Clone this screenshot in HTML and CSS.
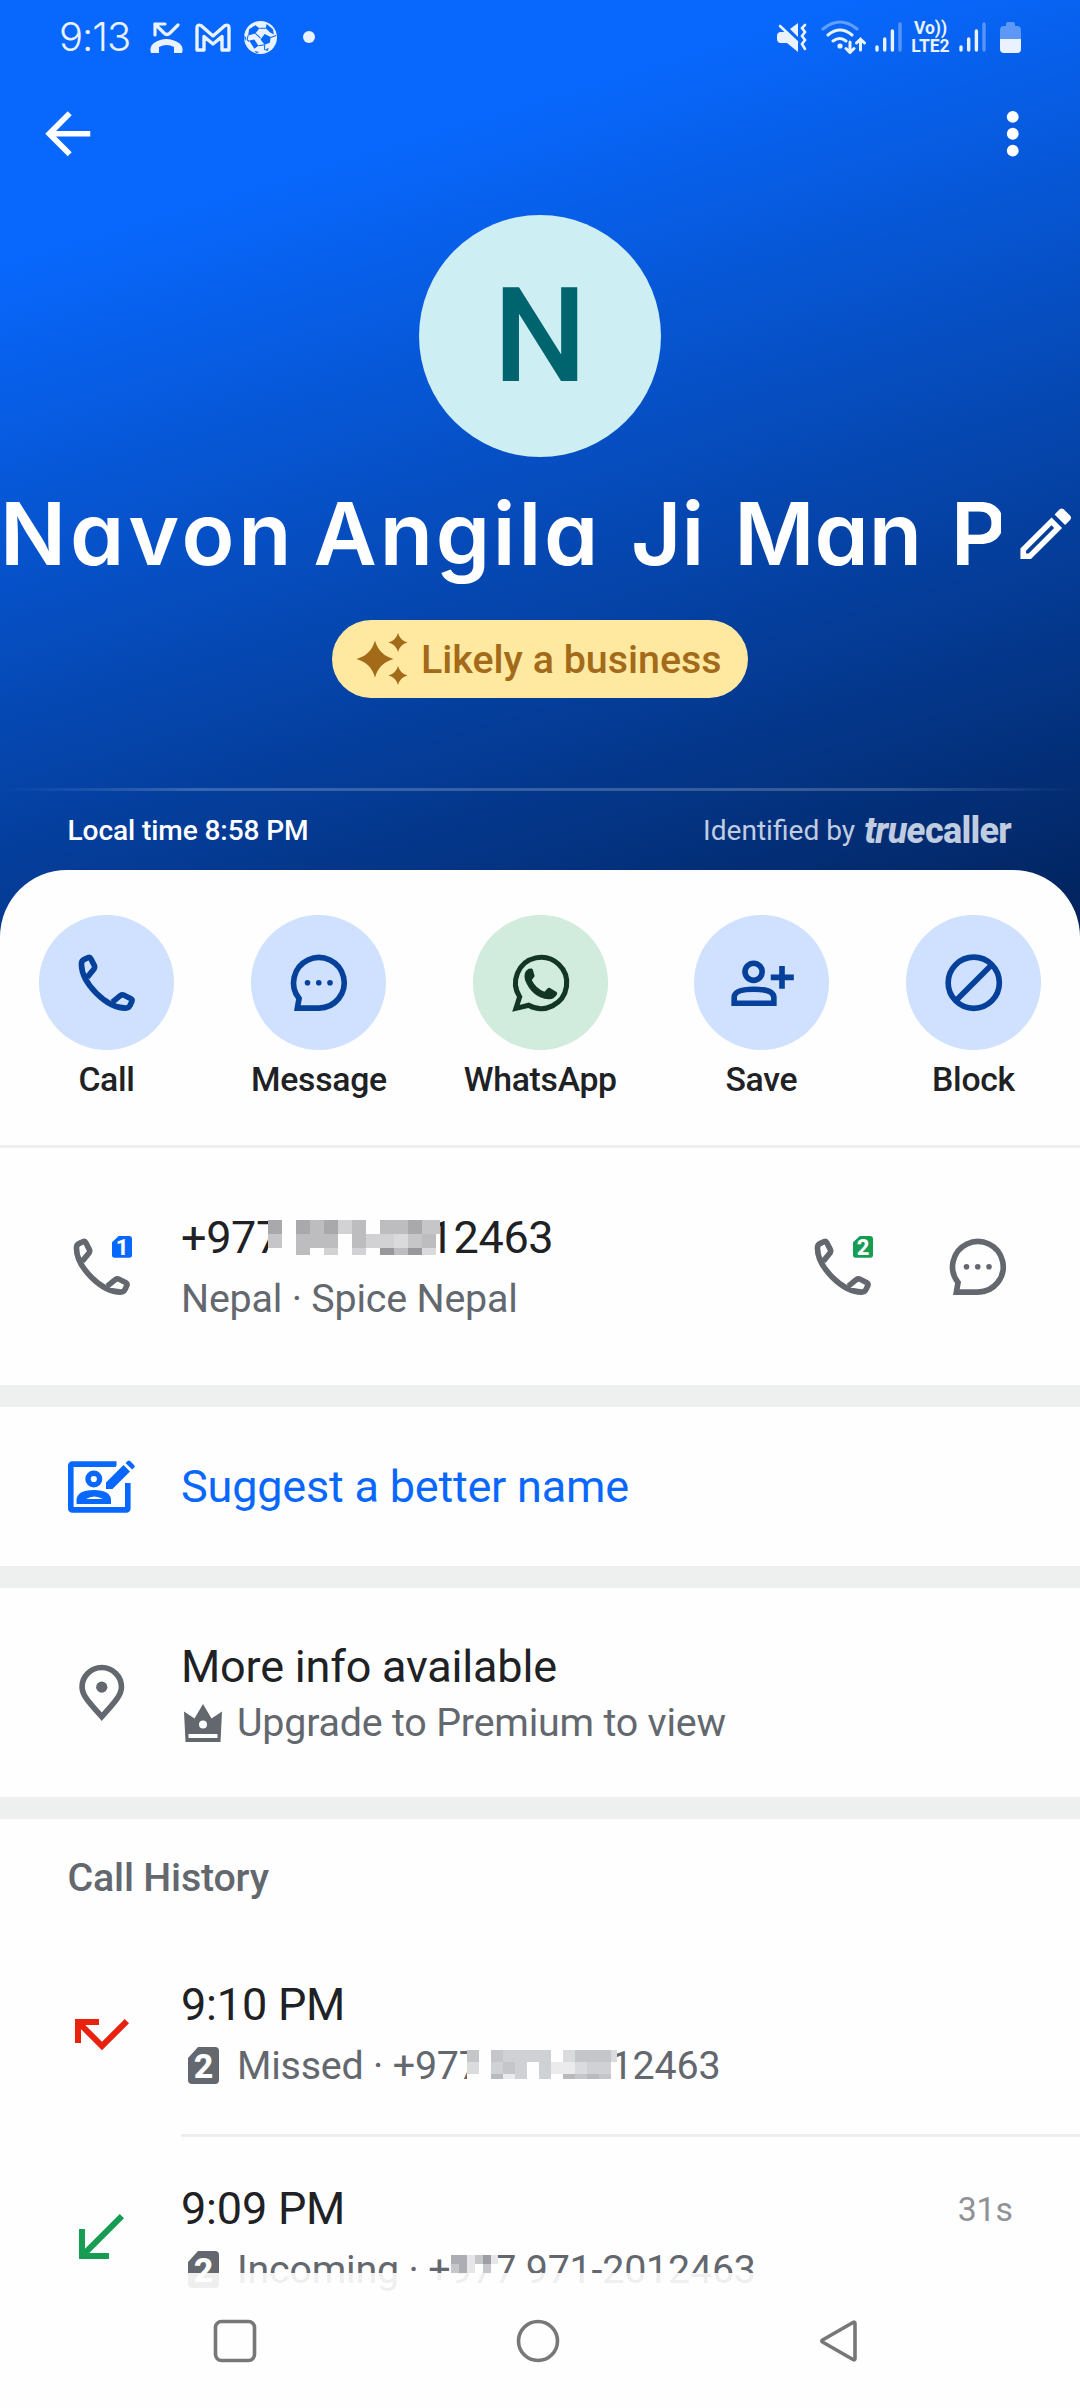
FILE: index.html
```html
<!DOCTYPE html>
<html lang="en">
<head>
<meta charset="utf-8">
<title>Caller details</title>
<link rel="stylesheet" href="styles.css">
</head>
<body>
<svg class="defs" aria-hidden="true">
  <symbol id="phone" viewBox="0 0 24 24">
    <path fill="none" stroke="currentColor" stroke-width="2" stroke-linejoin="round" d="M5.1 10 7.4 7.2C7.7 6.8 7.8 6.4 7.6 5.9L6.3 3.4C6.1 3 5.8 2.9 5.3 3.1L4 3.7C3.3 4 3 4.4 3 5.3C3 12.1 11.9 21 18.7 21C19.6 21 20 20.7 20.3 20L20.9 18.7C21.1 18.2 21 17.9 20.6 17.7L18.1 16.4C17.6 16.2 17.2 16.3 16.8 16.6L14 18.9"/>
  </symbol>
  <symbol id="chat" viewBox="0 0 24 24">
    <path fill="none" stroke="currentColor" stroke-width="2" d="M12 21A9 9 0 1 0 5 17.6L4.4 21Z"/>
    <circle cx="8" cy="12" r="1"/><circle cx="12" cy="12" r="1"/><circle cx="16" cy="12" r="1"/>
  </symbol>
  <symbol id="signal" viewBox="0 0 27 30">
    <g stroke="currentColor" stroke-width="3.4" stroke-linecap="round"><path d="M2 25v3M9.7 17v11M17.4 9v19"/><path opacity=".35" d="M25 2v26"/></g>
  </symbol>
  <symbol id="sim" viewBox="0 0 31 37">
    <path d="M10 0H27a4 4 0 0 1 4 4V33a4 4 0 0 1-4 4H4a4 4 0 0 1-4-4V11Z"/>
  </symbol>
</svg>
<main class="screen">
  <header class="hero">
    <div class="status">
      <div class="status-left">
        <span class="clock">9:13</span>
        <svg class="s-missed" viewBox="0 0 33 31"><g fill="none" stroke="currentColor" stroke-width="3.2" stroke-linecap="round" stroke-linejoin="round"><path d="M15 2H5v11M5 2l9 9q3 3 6 0l8-8"/></g><path d="M1 31q-2-6 3-10q12-8 25 0q5 4 3 10h-8v-6q-7-4-15 0v6z"/></svg>
        <svg class="s-mail" viewBox="0 0 36 29"><path fill="none" stroke="currentColor" stroke-width="3.4" stroke-linejoin="round" d="M2 27V5q0-4 4-2.500L18 13 30 2.500Q34 1 34 5V27H27V13.500L18 21 9 13.500V27Z"/></svg>
        <svg class="s-ball" viewBox="0 0 32 32"><circle cx="16" cy="16" r="16"/><g fill="#0868fe"><path d="M5 8l6-4 4 3-4 5-7 2zM22 3l6 5 1 5-4-2-4-4zM20 12.500l6 3-1 5.500-5 2-4-5zM5 19l5-1 4 6-4 3zM20 28l4-2-1 3zM10 29l5 1-3 1zM0 14l2 2-1 4z"/></g><path fill="none" stroke="#0868fe" d="M11 12l5 4.500M15 7l6 0M20 23v5M14 24l6-1M26 16l5-2M4 14l-1 4 2 2"/></svg>
        <span class="dot"></span>
      </div>
      <div class="status-right">
        <svg class="s-mute" viewBox="0 0 30 29"><path d="M4 9h5L21 20v9L10 20H3q-3-1-3-4v-3q0-4 4-4zM13 6l8-6v14z"/><path fill="none" stroke="currentColor" stroke-width="2.600" stroke-linecap="round" d="M3 3l17 16M28 2l-3 3 3 4-3 4 3 4-3 4 3 5"/></svg>
        <svg class="s-wifi" viewBox="0 0 45 34"><g fill="none" stroke="currentColor" stroke-width="3" stroke-linecap="round"><path opacity=".4" d="M2 9Q19-5 36 9"/><path d="M7 15Q19 5 31 15M12 21q7-5 13 0M29 22v10M25 28.500l4 4 4-4M39.500 30V19M35.500 23l4-4 4 4"/></g><circle cx="19" cy="26" r="2.600"/></svg>
        <svg class="s-signal"><use href="#signal"/></svg>
        <span class="volte"><span>Vo))</span><span>LTE2</span></span>
        <svg class="s-signal"><use href="#signal"/></svg>
        <svg class="s-batt" viewBox="0 0 21 31"><path opacity=".38" d="M6 4V2q0-2 2-2h5q2 0 2 2v2h2q4 0 4 4v9H0V8q0-4 4-4z"/><path d="M0 17h21v10q0 4-4 4H4q-4 0-4-4z"/></svg>
      </div>
    </div>
    <nav class="appbar">
      <svg class="icon" viewBox="0 0 24 24"><path d="M20 11H7.830l5.590-5.590L12 4l-8 8 8 8 1.410-1.410L7.830 13H20v-2z"/></svg>
      <svg class="icon" viewBox="0 0 24 24"><circle cx="12" cy="6" r="2.100"/><circle cx="12" cy="12" r="2.100"/><circle cx="12" cy="18" r="2.100"/></svg>
    </nav>
    <div class="avatar">N</div>
    <div class="name-row">
      <h1 class="name"><span class="w1">Navon</span> <span class="w2">Angila</span> <span class="w3">Ji</span> <span class="w4">Man</span> P</h1>
      <svg class="icon edit" viewBox="0 0 24 24"><path d="M14.060 9.020l.92.92L5.920 19H5v-.92l9.060-9.060M17.660 3c-.25 0-.51.1-.7.29l-1.830 1.830 3.750 3.750 1.830-1.830c.39-.39.39-1.020 0-1.410l-2.340-2.340c-.2-.2-.45-.29-.71-.29zm-3.600 3.190L3 17.250V21h3.750L17.810 9.940l-3.750-3.750z"/></svg>
    </div>
    <div class="badge">
      <svg class="sparkle" viewBox="0 0 52 52"><path d="M19 7.500Q23 22 37.500 26Q23 30 19 44.500Q15 30 .5 26Q15 22 19 7.500ZM42 0Q44 7.500 51.500 9.500Q44 11.500 42 19Q40 11.500 32.500 9.500Q40 7.500 42 0ZM42 33Q44 40.500 51.500 42.500Q44 44.500 42 52Q40 44.500 32.500 42.500Q40 40.500 42 33Z"/></svg>
      <span>Likely a business</span>
    </div>
    <div class="hero-line"></div>
    <div class="hero-foot">
      <span>Local time 8:58 PM</span>
      <span class="ident">Identified by <span class="brand"><i>true</i><b>caller</b></span></span>
    </div>
  </header>

  <section class="sheet">
    <div class="actions">
      <div class="action"><span class="disc"><svg class="icon"><use href="#phone"/></svg></span>Call</div>
      <div class="action"><span class="disc"><svg class="icon"><use href="#chat"/></svg></span>Message</div>
      <div class="action"><span class="disc green"><svg class="icon" viewBox="0 0 24 24"><path fill="none" stroke="currentColor" stroke-width="1.800" d="M3.200 21.100L4.500 17A9.100 9.100 0 1 1 7.700 20Z"/><path d="M7.700 7L8.700 6.900Q9.100 7 9.200 7.400L9.800 9.500Q9.800 9.900 8.800 11Q10.200 13.900 13.300 15.200L14.600 13.900Q14.900 13.700 15.300 13.900L17.600 15.300Q18 15.600 17.800 16.100Q16.800 18 14.800 17.900Q8.800 17.200 6.400 11Q5.600 8.300 7.700 7Z"/></svg></span>WhatsApp</div>
      <div class="action"><span class="disc"><svg class="icon" viewBox="0 0 24 24"><g fill="none" stroke="currentColor" stroke-width="2"><circle cx="9.100" cy="8.100" r="3.050"/><path d="M2.200 19.300V17.200Q2.200 14.300 9.200 14.300T16.300 17.200V19.300Z"/><path d="M19.200 6v8.100M15.200 10.100h8.200"/></g></svg></span>Save</div>
      <div class="action"><span class="disc"><svg class="icon" viewBox="0 0 24 24"><g fill="none" stroke="currentColor" stroke-width="2"><circle cx="12" cy="12" r="9.100"/><path d="M18.300 5.700L5.700 18.300"/></g></svg></span>Block</div>
    </div>

    <div class="row number-row">
      <span class="lead sim-call blue"><svg class="icon"><use href="#phone"/></svg><span class="tag">1</span></span>
      <div class="texts">
        <div class="title"><span class="masked">+977 971-2012463
          <svg class="mosaic m1" viewBox="0 0 172 34.500" shape-rendering="crispEdges"><path fill="#fefefe" d="M0 0h172v34.500H0z"/><path fill="#a9a9ab" d="M0 0h14v14H0zM28 0h14v14H28zM56 0h14v14H56zM140 0h14v14h-14z"/><path fill="#bdbdbf" d="M42 0h14v14H42zM84 0h14v14H84zM112 0h28v14h-28zM28 14h42v14H28zM84 14h14v14H84zM154 14h14v14h-14zM28 28h14v6.500H28zM126 28h14v6.500h-14z"/><path fill="#c6c6c8" d="M154 0h18v14h-18zM0 14h14v14H0zM140 14h14v14h-14z"/><path fill="#d2d2d4" d="M70 0h14v14H70zM98 14h28v14H98zM56 28h14v6.500H56zM84 28h14v6.500H84z"/><path fill="#dadadc" d="M126 14h14v14h-14zM154 28h14v6.500h-14z"/><path fill="#98989a" d="M112 28h14v6.500h-14zM140 28h14v6.500h-14z"/></svg></span></div>
        <div class="sub">Nepal · Spice Nepal</div>
      </div>
      <span class="sim-call green"><svg class="icon"><use href="#phone"/></svg><span class="tag">2</span></span>
      <svg class="icon"><use href="#chat"/></svg>
    </div>

    <div class="row suggest-row">
      <span class="lead"><svg class="suggest" viewBox="66 1459 72 56"><path fill="none" stroke="currentColor" stroke-width="5.600" stroke-linejoin="round" d="M116.500 1464.100H72.300a1.500 1.500 0 0 0-1.500 1.500v42.800a1.500 1.500 0 0 0 1.500 1.500h54a1.500 1.500 0 0 0 1.500-1.500V1483"/><circle cx="93.800" cy="1479" r="5.800" fill="none" stroke="currentColor" stroke-width="5.400"/><path fill-rule="evenodd" d="M76.500 1504v-4Q77 1490 93.800 1490T111 1500v4zM86 1499h17Q94 1494 86 1499Z"/><path d="M106 1489v-6.500l17.500-17.500 6.500 6.500-17.500 17.500zM125.500 1463l2.300-2q1.200-1 2.300 0l4.200 4.200q1 1.200 0 2.400l-2.200 2z"/><path fill="#fff" d="M115 1467.500l6-6.500h3l-6 6.500zM125 1478l6-6v3l-6 7z"/></svg></span>
      <div class="title link">Suggest a better name</div>
    </div>

    <div class="row info-row">
      <span class="lead"><svg class="icon" viewBox="0 0 24 24"><path fill="none" stroke="currentColor" stroke-width="2" d="M12 20.500C8 16 5 13 5 10a7 7 0 0 1 14 0C19 13 16 16 12 20.500Z"/><circle cx="12" cy="10" r="2"/></svg></span>
      <div class="texts">
        <div class="title">More info available</div>
        <div class="sub with-mark"><svg class="crown" viewBox="0 0 38 38"><path fill-rule="evenodd" d="M0 7.500L10.500 14.500 19 0 27.500 14.500 38 7.500 36.500 38H1.500ZM4.500 30v4h29v-4ZM15 20.500a4 4 0 1 0 8 0a4 4 0 1 0-8 0Z"/></svg>Upgrade to Premium to view</div>
      </div>
    </div>

    <h2 class="heading">Call History</h2>
    <div class="row call">
      <span class="lead missed"><svg class="arrow" viewBox="0 0 24 24"><path d="M19.590 7L12 14.590 6.410 9H11V7H3v8h2v-4.590l7 7 9-9L19.590 7z"/></svg></span>
      <div class="call-body ruled">
        <div class="texts">
          <div class="title">9:10 PM</div>
          <div class="sub with-mark"><span class="sim-mark"><svg><use href="#sim"/></svg><b>2</b></span><span class="masked">Missed · +977 971-2012463
            <svg class="mosaic m2" viewBox="0 0 150 29" shape-rendering="crispEdges"><path fill="#fefefe" d="M0 0h150v29H0z"/><path fill="#c5c6ca" d="M0 0h12v12H0zM24 0h12v12H24zM108 0h36v12h-36zM36 12h12v12H36zM108 24h12v5h-12zM132 24h12v5h-12z"/><path fill="#d0d1d4" d="M36 0h48v12H36zM24 12h12v12H24zM48 12h12v12H48zM72 12h12v12H72zM120 12h24v12h-24zM48 24h12v5H48zM72 24h12v5H72z"/><path fill="#dadbdd" d="M96 0h12v12H96zM0 12h12v12H0zM108 12h12v12h-12zM144 0h6v12h-6z"/><path fill="#ebebed" d="M84 12h24v12H84zM36 24h12v5H36z"/><path fill="#b9babe" d="M24 24h12v5H24zM96 24h12v5H96zM120 24h12v5h-12z"/></svg></span></div>
        </div>
      </div>
    </div>
    <div class="row call">
      <span class="lead incoming"><svg class="arrow" viewBox="0 0 24 24"><path d="M20 5.410L18.590 4 7 15.590V9H5v10h10v-2H8.410z"/></svg></span>
      <div class="call-body">
        <div class="texts">
          <div class="title">9:09 PM</div>
          <div class="sub with-mark"><span class="sim-mark"><svg><use href="#sim"/></svg><b>2</b></span><span class="masked">Incoming · +977 971-2012463
            <svg class="mosaic m3" viewBox="0 0 47 18" shape-rendering="crispEdges"><path fill="#fefefe" d="M0 0h47v18H0z"/><path fill="#adaeb3" d="M0 0h16v9H0zM8 9h8v9H8z"/><path fill="#c6c7ca" d="M24 0h8v9h-8zM0 9h8v9H0zM32 9h8v9h-8z"/><path fill="#9d9ea4" d="M32 0h8v9h-8z"/><path fill="#e6e6e8" d="M16 0h8v18h-8zM40 0h7v9h-7z"/></svg></span></div>
        </div>
        <span class="duration">31s</span>
      </div>
    </div>
  </section>

  <footer class="navbar">
    <svg viewBox="0 0 44 44"><rect x="2.500" y="2.500" width="39" height="39" rx="6"/></svg>
    <svg viewBox="0 0 44 44"><circle cx="22" cy="22" r="19.500"/></svg>
    <svg viewBox="0 0 44 44"><path stroke-linejoin="round" d="M37 4.500V39.500Q37 41.500 35 40.500L4.500 23Q3 22 4.500 21L35 3.500Q37 2.500 37 4.500Z"/></svg>
  </footer>
</main>
</body>
</html>
```

FILE: styles.css
```css
* { box-sizing: border-box; }
body { margin: 0; font-family: Roboto, sans-serif; color: #202124; background: #fff; }
svg { display: block; fill: currentColor; flex: none; }
h1, h2 { margin: 0; }
.defs { position: absolute; width: 0; height: 0; }
.screen { position: relative; width: 1080px; height: 2408px; overflow: hidden; background: #fefefe; }
.icon { width: 67.5px; height: 67.5px; }

/* Hero */
.hero { height: 937px; display: flex; flex-direction: column; color: #fff; background: linear-gradient(163deg, #0868fe 20%, #02225a 100%); }
.status { height: 74px; padding: 0 59px; display: flex; justify-content: space-between; align-items: center; color: #eaf2ff; flex: none; }
.status-left, .status-right { display: flex; align-items: center; }
.clock { font: 350 40px/74px Inter, sans-serif; letter-spacing: -1px; width: 91px; }
.s-missed { width: 33px; height: 31px; margin-right: 12px; }
.s-mail { width: 36px; height: 29px; margin-right: 13px; }
.s-ball { width: 33px; height: 33px; margin-right: 26px; }
.dot { width: 12px; height: 12px; border-radius: 50%; background: currentColor; }
.s-mute { width: 30px; height: 29px; margin-right: 14px; }
.s-wifi { width: 45px; height: 34px; margin-right: 9px; }
.s-signal { width: 27px; height: 30px; margin-right: 9px; }
.volte { display: flex; flex-direction: column; align-items: center; width: 39px; margin-right: 9px; font-size: 17.5px; font-weight: 700; line-height: 18px; }
.volte + .s-signal { margin-right: 14px; }
.s-batt { width: 21px; height: 31px; }
.appbar { height: 120px; padding: 0 34px; display: flex; justify-content: space-between; align-items: center; flex: none; }
.avatar { width: 242px; height: 242px; margin: 21px auto 12px; border-radius: 50%; background: #cdeef3; color: #00646e; font-size: 132px; font-weight: 500; line-height: 242px; text-align: center; flex: none; }
.name-row { height: 130px; display: flex; align-items: center; flex: none; }
.name { width: 1001px; overflow: hidden; white-space: nowrap; font: 600 87px/130px Inter, sans-serif; font-feature-settings: "cv11"; margin-right: 11px; flex: none; }
.w1 { letter-spacing: 3.9px; margin-right: -3.9px; }
.w2 { letter-spacing: 2.8px; margin-right: 8px; }
.w3 { margin-right: 8px; }
.w4 { margin-right: 7px; }
.badge { width: 416px; height: 78px; margin: 21px auto 90px; padding-left: 24px; border-radius: 39px; display: flex; align-items: center; gap: 13px; background: #ffe9a0; color: #a26a19; font-size: 39.4px; font-weight: 500; white-space: nowrap; flex: none; }
.sparkle { width: 52px; height: 52px; }
.hero-line { height: 3px; flex: none; background: linear-gradient(90deg, transparent, rgba(255,255,255,.2) 18%, rgba(255,255,255,.2) 82%, transparent); }
.hero-foot { height: 79px; padding: 0 69px 0 67.5px; display: flex; align-items: center; justify-content: space-between; font-size: 28.1px; font-weight: 500; letter-spacing: -.1px; flex: none; }
.ident { display: flex; align-items: center; gap: 9px; color: #c0cce0; font-weight: 400; letter-spacing: 0; }
.brand { font-size: 36px; line-height: 36px; letter-spacing: -.7px; }
.brand i, .brand b { font-weight: 800; }

/* Sheet */
.sheet { position: relative; margin-top: -67px; background: #fefefe; border-radius: 67px 67px 0 0; }
.actions { height: 278px; padding: 45px 39px 0; display: flex; justify-content: space-between; border-bottom: 3px solid #efefef; }
.action { display: flex; flex-direction: column; align-items: center; min-width: 135px; font-size: 33.75px; line-height: 40px; font-weight: 500; letter-spacing: -.3px; }
.disc { width: 135px; height: 135px; margin-bottom: 10px; border-radius: 50%; display: flex; align-items: center; justify-content: center; background: #cfe1ff; color: #05409a; }
.disc.green { background: #d1ebdd; color: #123524; }
.row { display: flex; align-items: center; }
.lead { width: 181px; padding-left: 67.5px; color: #63676e; flex: none; }
.texts { flex: 1; }
.title { font-size: 45px; line-height: 61px; letter-spacing: -.2px; white-space: nowrap; }
.sub { font-size: 39.4px; line-height: 61px; letter-spacing: -.2px; color: #63676e; white-space: nowrap; }
.number-row { height: 237px; padding-right: 68.5px; color: #63676e; }
.number-row .title { color: #202124; letter-spacing: -.35px; }
.number-row .texts { padding-top: 2px; }
.number-row > .sim-call.green { margin-right: 67.5px; }
.sim-call { position: relative; }
.tag { position: absolute; top: 3px; width: 20px; height: 22px; border-radius: 3px; color: #fff; font-size: 22px; line-height: 23px; font-weight: 800; text-align: center; clip-path: polygon(35% 0, 100% 0, 100% 100%, 0 100%, 0 30%); }
.blue .tag { left: 112px; background: #0868fe; }
.green .tag { left: 44px; background: #179c54; }
.masked { position: relative; }
.mosaic { position: absolute; }
.m1 { left: 87px; top: 9.5px; width: 172px; height: 34.5px; }
.m2 { left: 230px; top: 15px; width: 150px; height: 29px; }
.m3 { left: 214px; top: 16px; width: 47px; height: 18px; }
.suggest-row { height: 203px; border: solid #eef0ef; border-width: 22px 0; }
.suggest { width: 72px; height: 56px; margin-left: -1.5px; }
.suggest-row .lead, .link { color: #0868fe; }
.info-row { height: 231px; border-bottom: 22px solid #eef0ef; }
.info-row .texts { padding-top: 5px; }
.info-row .title, .info-row .sub { line-height: 56px; }
.with-mark { display: flex; align-items: center; }
.crown { width: 38px; height: 38px; margin: 0 15px 0 3px; }
.heading { height: 114px; padding: 1.5px 0 0 67.5px; line-height: 114px; font-size: 39.4px; font-weight: 500; letter-spacing: -.2px; color: #63676e; }
.call { height: 204px; align-items: stretch; }
.call .lead { display: flex; align-items: center; padding: 0 0 3px 65.5px; }
.call .lead.missed { color: #e9220d; }
.call .lead.incoming { color: #179c54; padding-left: 64px; }
.arrow { width: 72px; height: 72px; }
.call-body { flex: 1; display: flex; align-items: center; padding: 3px 67px 0 0; border-bottom: 3px solid transparent; }
.call-body.ruled { border-color: #eee; }
.sim-mark { position: relative; width: 31px; height: 37px; margin: 0 18px 0 7px; }
.sim-mark svg { width: 31px; height: 37px; }
.sim-mark b { position: absolute; inset: 1px 0 0; color: #fff; font-size: 34px; line-height: 37px; font-weight: 800; text-align: center; }
.duration { align-self: flex-start; margin-top: 50px; font-size: 33.75px; line-height: 40px; color: #8f9296; }

/* System navigation */
.navbar { position: absolute; left: 0; right: 0; bottom: 0; height: 135px; padding: 0 218px 0 213px; display: flex; justify-content: space-between; align-items: center; background: rgba(254,254,254,.9); }
.navbar svg { width: 44px; height: 44px; fill: none; stroke: #777; stroke-width: 3.6; }
```
